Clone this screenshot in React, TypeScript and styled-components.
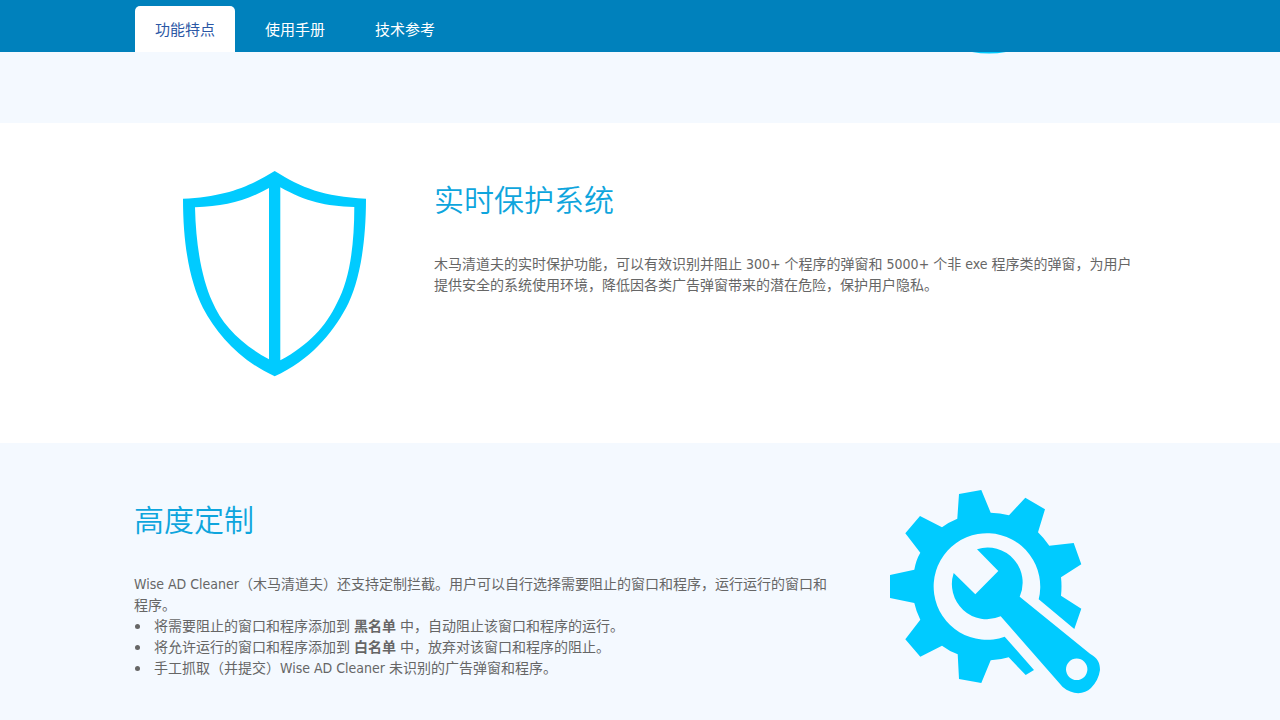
import React from "react";
import styled, { createGlobalStyle } from "styled-components";

const GlobalStyle = createGlobalStyle`
  *, *::before, *::after { box-sizing: border-box; }
  body {
    margin: 0;
    background: #ffffff;
    color: #666666;
    font-family: "DejaVu Sans Condensed", "Noto Sans CJK SC", sans-serif;
    font-size: 14px;
    line-height: 21px;
  }
`;

const Container = styled.div`
  width: 100%;
  max-width: 1010px;
  margin: 0 auto;
`;

const Header = styled.header`
  position: sticky;
  top: 0;
  z-index: 1;
  background: #0081bc;
`;

const Tabs = styled.nav`
  display: flex;
  gap: 10px;
  padding-top: 6px;
`;

const Tab = styled.a<{ $active?: boolean }>`
  width: 100px;
  height: 46px;
  border-radius: 5px 5px 0 0;
  background: ${(p) => (p.$active ? "#ffffff" : "transparent")};
  color: ${(p) => (p.$active ? "#2b57a5" : "#ffffff")};
  font-size: 15px;
  line-height: 48px;
  text-align: center;
  text-decoration: none;
`;

const Band = styled.section<{ $tinted?: boolean }>`
  min-height: 320px;
  padding: 47px 0;
  background: ${(p) => (p.$tinted ? "#f4f9ff" : "#ffffff")};
`;

const PreviousBand = styled.section`
  height: 71px;
  background: #f4f9ff;
`;

const Row = styled(Container)`
  display: flex;
  align-items: flex-start;
  gap: 20px;
  max-width: 1012px;
  padding-right: 11px;
`;

const Figure = styled.div`
  flex: 0 0 280px;
  display: flex;
  justify-content: center;
`;

const Copy = styled.div`
  flex: 1;
  min-width: 0;
`;

const Title = styled.h2`
  margin: 9px 0 31px;
  color: #0ea5dd;
  font-size: 30px;
  font-weight: 350;
  line-height: 44px;
`;

const Text = styled.p`
  margin: 0;
`;

const List = styled.ul`
  margin: 0;
  padding: 0;
  list-style: none;
`;

const Item = styled.li`
  display: flex;
  white-space: pre-wrap;

  &::before {
    content: "";
    flex: none;
    width: 5px;
    height: 5px;
    margin: 8px 14px 0 1px;
    border-radius: 50%;
    background: currentColor;
  }
`;

const PreviousFigure = styled(Figure)`
  margin-left: auto;
`;

const Shield = () => (
  <svg width="183" height="207" viewBox="0 -1 183 207" aria-hidden="true">
    <path
      fill="#00cbff"
      fillRule="evenodd"
      d="M91.7 0C119 17 140 25.500 183 27.700C183 78 175 115 163 137C149 163 127 189 91.700 205.300C56 189 34 163 20 137C8 113 0 78 0 27.700C44 25.500 67 15 91.700 0Z
         M86 17C61 31 42 35 12 36.300C13 79 20 110 29 130C39 154 58 173 86 188.300Z
         M97.300 16.300V189.300C126 174 143 155 154 132C166 110 171.300 77 171.300 36C142 35 124 31 97.300 16.300Z"
    />
  </svg>
);

const GearWrench = () => (
  <svg width="210" height="204" viewBox="0 0 210 204" fill="#00cbff" aria-hidden="true">
    <path
      d="M69 4L91.300 0L100.700 22.700Q110 22.800 119 25.300L135.300 7.700L155 19.300L148 42.300Q154 48 159.300 55.700L183.700 53L191.300 74.300L171 87.300Q172 96.500 171 105.700L191.300 118.700L184.300 139L148.700 109.300
         A53.300 53.300 0 1 0 114.700 146.800L144 180L135.700 185L118.700 167.300Q110 170 100.700 170.300L91.300 193L69 189L67.700 164.300Q59 161 52 155.700L30.300 166.700L15.300 149.300L30.300 129.700Q26 121 24.300 113L0 108V85L24.300 79.700Q26 70 30.300 62.700L15.300 43.300L30 26L52 37.300Q59 32 67.300 28.700Z"
    />
    <path
      fillRule="evenodd"
      d="M87 59.300A35 35 0 0 1 129.700 106.700L200 163.700C208 168 210 173 210 180C209 187 206 193 201 198C194 205 182 205 172.700 197L110.700 126.300A35 35 0 0 1 63.700 83L85.300 104.300L108.300 81Z
         M176 179.300a10.700 10.700 0 1 0 21.400 0a10.700 10.700 0 1 0 -21.400 0Z"
    />
  </svg>
);

const RoundBadgeEdge = () => (
  <svg width="46" height="2" viewBox="0 0 46 2" aria-hidden="true">
    <path fill="#00cbff" d="M0 0Q17 3 34 0Z" />
  </svg>
);

export default function App() {
  return (
    <>
      <GlobalStyle />
      <Header>
        <Container>
          <Tabs>
            <Tab href="#features" $active>功能特点</Tab>
            <Tab href="#manual">使用手册</Tab>
            <Tab href="#reference">技术参考</Tab>
          </Tabs>
        </Container>
      </Header>
      <main>
        <PreviousBand>
          <Row>
            <PreviousFigure>
              <RoundBadgeEdge />
            </PreviousFigure>
          </Row>
        </PreviousBand>
        <Band id="features">
          <Row>
            <Figure>
              <Shield />
            </Figure>
            <Copy>
              <Title>实时保护系统</Title>
              <Text>
                木马清道夫的实时保护功能，可以有效识别并阻止 300+ 个程序的弹窗和 5000+ 个非 exe 程序类的弹窗，为用户提供安全的系统使用环境，降低因各类广告弹窗带来的潜在危险，保护用户隐私。
              </Text>
            </Copy>
          </Row>
        </Band>
        <Band $tinted>
          <Row>
            <Copy>
              <Title>高度定制</Title>
              <Text>
                Wise AD Cleaner（木马清道夫）还支持定制拦截。用户可以自行选择需要阻止的窗口和程序，运行运行的窗口和程序。
              </Text>
              <List>
                <Item>
                  <span>将需要阻止的窗口和程序添加到 <strong>黑名单</strong> 中，自动阻止该窗口和程序的运行。</span>
                </Item>
                <Item>
                  <span>将允许运行的窗口和程序添加到 <strong>白名单</strong> 中，放弃对该窗口和程序的阻止。</span>
                </Item>
                <Item>
                  <span>手工抓取（并提交）Wise AD Cleaner 未识别的广告弹窗和程序。</span>
                </Item>
              </List>
            </Copy>
            <Figure>
              <GearWrench />
            </Figure>
          </Row>
        </Band>
      </main>
    </>
  );
}
